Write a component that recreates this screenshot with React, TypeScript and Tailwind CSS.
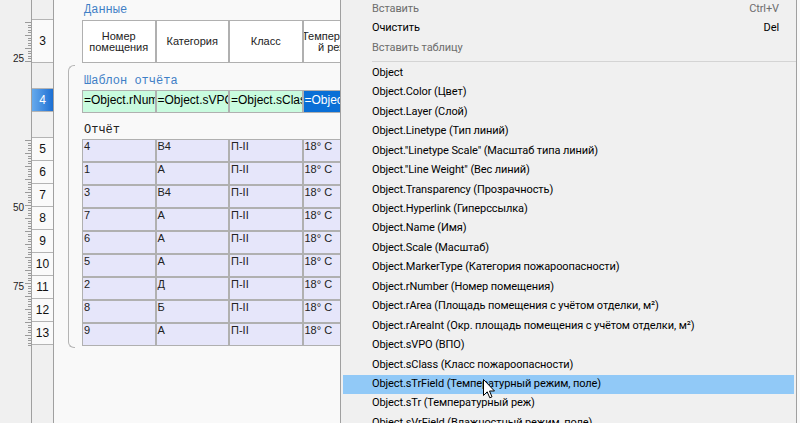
import React from 'react';

type ReportRow = { num: string; cat: string; cls: string; temp: string };

const reportRows: ReportRow[] = [
  { num: '4', cat: 'В4', cls: 'П-II', temp: '18° C' },
  { num: '1', cat: 'А', cls: 'П-II', temp: '18° C' },
  { num: '3', cat: 'В4', cls: 'П-II', temp: '18° C' },
  { num: '7', cat: 'А', cls: 'П-II', temp: '18° C' },
  { num: '6', cat: 'А', cls: 'П-II', temp: '18° C' },
  { num: '5', cat: 'А', cls: 'П-II', temp: '18° C' },
  { num: '2', cat: 'Д', cls: 'П-II', temp: '18° C' },
  { num: '8', cat: 'Б', cls: 'П-II', temp: '18° C' },
  { num: '9', cat: 'А', cls: 'П-II', temp: '18° C' },
];

const templateCells = ['=Object.rNumber', '=Object.sVPO', '=Object.sClass', '=Object.sTrField'];

const menuItems = [
  'Object',
  'Object.Color (Цвет)',
  'Object.Layer (Слой)',
  'Object.Linetype (Тип линий)',
  'Object."Linetype Scale" (Масштаб типа линий)',
  'Object."Line Weight" (Вес линий)',
  'Object.Transparency (Прозрачность)',
  'Object.Hyperlink (Гиперссылка)',
  'Object.Name (Имя)',
  'Object.Scale (Масштаб)',
  'Object.MarkerType (Категория пожароопасности)',
  'Object.rNumber (Номер помещения)',
  'Object.rArea (Площадь помещения с учётом отделки, м²)',
  'Object.rAreaInt (Окр. площадь помещения с учётом отделки, м²)',
  'Object.sVPO (ВПО)',
  'Object.sClass (Класс пожароопасности)',
  'Object.sTrField (Температурный режим, поле)',
  'Object.sTr (Температурный реж)',
  'Object.sVrField (Влажностный режим, поле)',
];

const HIGHLIGHTED = 'Object.sTrField (Температурный режим, поле)';

// ruler ticks only next to the numbered rows
const Ruler: React.FC = () => {
  const ticks: { y: number; len: number }[] = [];
  const segments: [number, number][] = [
    [21, 63],
    [139, 347],
  ];
  segments.forEach(([from, to]) => {
    let i = 0;
    for (let y = from + 1; y < to; y += 2.6) {
      ticks.push({ y: Math.round(y) + 0.5, len: i % 5 === 0 ? 6 : 3 });
      i++;
    }
  });
  return (
    <svg width="31" height="423" className="absolute left-0 top-0">
      {ticks.map((t, i) => (
        <line key={i} x1={31 - t.len} x2={31} y1={t.y} y2={t.y} stroke="#9a9a9a" strokeWidth="1" />
      ))}
      <text x="24" y="62" textAnchor="end" fontSize="10" fontFamily="Liberation Sans, Arial, sans-serif" fill="#222">25</text>
      <text x="24" y="211" textAnchor="end" fontSize="10" fontFamily="Liberation Sans, Arial, sans-serif" fill="#222">50</text>
      <text x="24" y="290" textAnchor="end" fontSize="10" fontFamily="Liberation Sans, Arial, sans-serif" fill="#222">75</text>
    </svg>
  );
};

const RowHead: React.FC<{ n?: string; h: string; active?: boolean }> = ({ n, h, active }) => (
  <div
    className={`${h} shrink-0 flex items-center justify-center border-b border-[#b4b4b4] text-[12px] ${
      active ? 'bg-gradient-to-r from-[#66aaec] to-[#1b6fd3] text-white' : 'bg-[#fafafa] text-[#111]'
    }`}
  >
    {n}
  </div>
);

const Cursor: React.FC = () => (
  <svg width="13" height="20" viewBox="0 0 13 20" className="absolute left-[483px] top-[379px]">
    <path d="M0.5 0.5 L0.5 16.5 L4.2 12.8 L6.8 18.8 L9 17.8 L6.5 12 L11.5 12 Z" fill="#fff" stroke="#000" strokeWidth="1" strokeLinejoin="round" />
  </svg>
);

export default function App() {
  return (
    <div className="relative w-[800px] h-[423px] overflow-hidden flex bg-[#f9f9f9] font-['Liberation_Sans',Arial,sans-serif]">
      {/* ruler */}
      <div className="relative w-[32px] shrink-0 bg-[#f0f0f0] border-r border-[#a0a0a0]">
        <Ruler />
      </div>

      {/* row headers */}
      <div className="w-[22px] shrink-0 flex flex-col bg-[#f0f0f0] border-r border-[#a0a0a0]">
        <div className="h-[20px] shrink-0 border-b border-[#b4b4b4]" />
        <RowHead n="3" h="h-[43px]" />
        <div className="h-[26px] shrink-0 border-b border-[#b4b4b4]" />
        <RowHead n="4" h="h-[23px]" active />
        <div className="h-[26px] shrink-0 border-b border-[#b4b4b4]" />
        {['5', '6', '7', '8', '9', '10', '11', '12', '13'].map((n) => (
          <RowHead key={n} n={n} h="h-[23px]" />
        ))}
      </div>

      {/* canvas */}
      <div className="flex-1 flex flex-col">
        <div className="pl-[28px]">
          <div className="h-[20px] pt-[3px] pl-[2px] text-[12px] leading-[14px] font-['Liberation_Mono',monospace] text-[#3f7fc6]">
            Данные
          </div>
          <div className="flex">
            {[
              ['Номер', 'помещения'],
              ['Категория'],
              ['Класс'],
              ['Температурны', 'й режим'],
            ].map((lines, i) => (
              <div
                key={i}
                className="w-[73.5px] h-[43px] shrink-0 border border-[#b0b0b0] bg-white flex flex-col items-center justify-center text-[11px] leading-[11px] text-[#222] overflow-hidden whitespace-nowrap"
              >
                {lines.map((l) => (
                  <span key={l}>{l}</span>
                ))}
              </div>
            ))}
          </div>
        </div>

        <div className="mt-[2px] ml-[14px] flex">
          <div className="w-[7px] shrink-0 border-l border-t border-b border-[#b4b4b4] rounded-l-[6px]" />
          <div className="pl-[7px] pb-[2px]">
            <div className="h-[25px] pt-[9px] pl-[2px] text-[12px] leading-[14px] font-['Liberation_Mono',monospace] text-[#3f7fc6]">
              Шаблон отчёта
            </div>
            <div className="flex">
              {templateCells.map((t, i) => (
                <div
                  key={t}
                  className={`w-[73.5px] h-[23px] shrink-0 border border-[#b0b0b0] overflow-hidden whitespace-nowrap pl-[1px] text-[12px] leading-[18px] ${
                    i === 3 ? 'bg-[#0a6fd6] text-white' : 'bg-[#c9fbdf] text-black'
                  }`}
                >
                  {t}
                </div>
              ))}
            </div>
            <div className="h-[26px] pt-[10px] pl-[2px] text-[12px] leading-[14px] font-['Liberation_Mono',monospace] text-[#222]">
              Отчёт
            </div>
            <div className="flex flex-col">
              {reportRows.map((r, idx) => (
                <div key={idx} className="flex">
                  {[r.num, r.cat, r.cls, r.temp].map((v, i) => (
                    <div
                      key={i}
                      className="w-[73.5px] h-[23px] shrink-0 border border-[#b0b0b0] bg-[#e6e6fa] pl-[1px] text-[11px] leading-[13px] text-[#222] overflow-hidden whitespace-nowrap"
                    >
                      {v}
                    </div>
                  ))}
                </div>
              ))}
            </div>
          </div>
        </div>
      </div>

      {/* context menu */}
      <div className="absolute left-[340px] top-[-1px] w-[457px] h-[440px] bg-[#f0f0f0] border-l border-r border-[#a0a0a0] font-['Roboto','Segoe_UI',sans-serif] text-[11px] tracking-[-0.1px]">
        <div className="mx-[2px] h-[19.5px] flex items-center justify-between pl-[29px] pr-[15px] text-[#6d6d6d]">
          <span>Вставить</span>
          <span>Ctrl+V</span>
        </div>
        <div className="mx-[2px] h-[19.5px] flex items-center justify-between pl-[29px] pr-[15px] text-black">
          <span>Очистить</span>
          <span>Del</span>
        </div>
        <div className="mx-[2px] h-[19.5px] flex items-center pl-[29px] text-[#6d6d6d]">
          <span>Вставить таблицу</span>
        </div>
        <div className="h-[6px] pl-[31px] pt-[3px]">
          <div className="h-px bg-[#d4d4d4]" />
        </div>
        {menuItems.map((m) => (
          <div
            key={m}
            className={`mx-[2px] h-[19.45px] flex items-center pl-[29px] whitespace-nowrap text-black ${
              m === HIGHLIGHTED ? 'bg-[#91c9f7]' : ''
            }`}
          >
            {m}
          </div>
        ))}
      </div>

      <Cursor />
    </div>
  );
}
